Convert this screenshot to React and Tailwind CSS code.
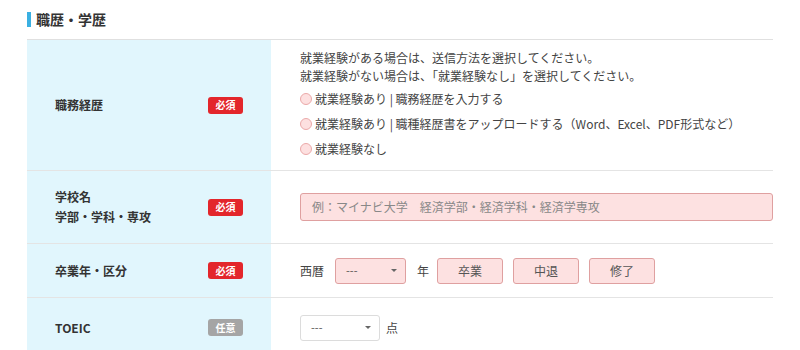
import React from 'react';

const FONT = "font-['Noto_Sans_CJK_JP','Noto_Sans',sans-serif]";

function Badge({ required = true }) {
  return (
    <span
      className={`inline-flex items-center justify-center w-[35px] h-[17px] rounded-[3px] text-[10px] font-bold text-white leading-none ${
        required ? 'bg-[#e3262b]' : 'bg-[#a5a5a5]'
      }`}
    >
      {required ? '必須' : '任意'}
    </span>
  );
}

function Row({ label, required, children, height }) {
  return (
    <div className={`flex border-b border-[#e4e4e4] ${height}`}>
      <div className="w-[244px] shrink-0 bg-[#e1f6fd] flex items-center justify-between pl-[28px] pr-[28px]">
        <div className="text-[12px] font-bold text-[#333] leading-[20px]">{label}</div>
        <Badge required={required} />
      </div>
      <div className="flex-1 flex flex-col justify-center pl-[29px]">{children}</div>
    </div>
  );
}

function Radio({ children }) {
  return (
    <label className="flex items-center gap-[3px] h-[25px]">
      <span className="w-[12px] h-[12px] rounded-full bg-[#fde0e0] border border-[#eba9a9]" />
      <span>{children}</span>
    </label>
  );
}

function Select({ pink, width }) {
  return (
    <div
      className={`flex items-center justify-between h-[26px] rounded-[3px] border pl-[10px] pr-[8px] ${width} ${
        pink ? 'bg-[#fde1e1] border-[#dfa0a0]' : 'bg-white border-[#dcdcdc]'
      }`}
    >
      <span className="text-[11px] text-[#555]">---</span>
      <span className="w-0 h-0 border-l-[3px] border-r-[3px] border-t-[3px] border-l-transparent border-r-transparent border-t-[#666]" />
    </div>
  );
}

function Choice({ children }) {
  return (
    <div className="w-[66px] h-[26px] flex items-center justify-center rounded-[3px] border border-[#dfa0a0] bg-[#fde1e1] text-[12px] text-[#555]">
      {children}
    </div>
  );
}

export default function App() {
  return (
    <div className={`w-[800px] h-[350px] bg-white overflow-hidden ${FONT} text-[#333]`}>
      <div className="pl-[27px] pt-[9px] flex items-center gap-[5px] h-[30px]">
        <span className="w-[4px] h-[15px] bg-[#3ab0e2]" />
        <h2 className="text-[14px] font-bold text-[#333]">職歴・学歴</h2>
      </div>
      <div className="mx-[27px] mt-[9px] border-t border-[#e0e0e0]">
        <Row label="職務経歴" required height="h-[131px]">
          <div className="text-[12px] leading-[18px] text-[#444]">
            <p>就業経験がある場合は、送信方法を選択してください。</p>
            <p>就業経験がない場合は、「就業経験なし」を選択してください。</p>
          </div>
          <div className="text-[12px] text-[#444] mt-[2px]">
            <Radio>就業経験あり | 職務経歴を入力する</Radio>
            <Radio>就業経験あり | 職種経歴書をアップロードする（Word、Excel、PDF形式など）</Radio>
            <Radio>就業経験なし</Radio>
          </div>
        </Row>
        <Row
          label={
            <>
              学校名
              <br />
              学部・学科・専攻
            </>
          }
          required
          height="h-[73px]"
        >
          <div className="h-[28px] rounded-[3px] border border-[#dfa0a0] bg-[#fde1e1] flex items-center px-[11px] text-[12px] text-[#888]">
            例：マイナビ大学　経済学部・経済学科・経済学専攻
          </div>
        </Row>
        <Row label="卒業年・区分" required height="h-[54px]">
          <div className="flex items-center text-[12px] text-[#444]">
            <span className="mr-[11px]">西暦</span>
            <Select pink width="w-[71px]" />
            <span className="ml-[11px] mr-[8px]">年</span>
            <div className="flex gap-[10px]">
              <Choice>卒業</Choice>
              <Choice>中退</Choice>
              <Choice>修了</Choice>
            </div>
          </div>
        </Row>
        <Row label="TOEIC" required={false} height="h-[60px]">
          <div className="flex items-center text-[12px] text-[#444]">
            <Select width="w-[80px]" />
            <span className="ml-[6px]">点</span>
          </div>
        </Row>
      </div>
    </div>
  );
}
